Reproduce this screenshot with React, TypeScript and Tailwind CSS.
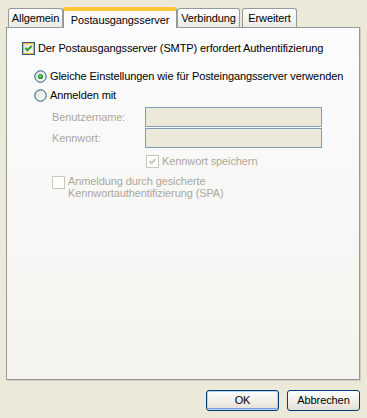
import React from "react";

const font = "font-['Tahoma','Liberation_Sans','DejaVu_Sans',sans-serif]";

const Check = ({ checked, disabled, hover }: { checked?: boolean; disabled?: boolean; hover?: boolean }) => (
    <svg width="13" height="13" viewBox="0 0 13 13" className="shrink-0">
        <defs>
            <linearGradient id="cbg" x1="0" y1="0" x2="1" y2="1">
                <stop offset="0" stopColor="#DCDCD7" />
                <stop offset="1" stopColor="#FFFFFF" />
            </linearGradient>
        </defs>
        <rect x="0.5" y="0.5" width="12" height="12" fill={disabled ? "#FFFFFF" : "url(#cbg)"} stroke={disabled ? "#CAC8BB" : "#1C5180"} />
        {hover && <rect x="1.5" y="1.5" width="10" height="10" fill="none" stroke="#F8B636" strokeWidth="1.2" />}
        {checked && (
            <polyline points="3.5,6 5.5,8.3 9.6,3.8" fill="none" stroke={disabled ? "#CAC8BB" : "#21A121"} strokeWidth="2" />
        )}
    </svg>
);

const Radio = ({ checked }: { checked?: boolean }) => (
    <svg width="13" height="13" viewBox="0 0 13 13" className="shrink-0">
        <defs>
            <linearGradient id="rbg" x1="0" y1="0" x2="1" y2="1">
                <stop offset="0" stopColor="#DCDCD7" />
                <stop offset="1" stopColor="#FFFFFF" />
            </linearGradient>
        </defs>
        <circle cx="6.5" cy="6.5" r="5.7" fill="url(#rbg)" stroke="#1C5180" strokeWidth="1" />
        {checked && (
            <>
                <circle cx="6.5" cy="6.5" r="2.6" fill="#21A121" />
                <circle cx="6.2" cy="6.2" r="1.1" fill="#7FD97F" />
            </>
        )}
    </svg>
);

const tabs = ["Allgemein", "Postausgangsserver", "Verbindung", "Erweitert"];
const tabWidths = ["w-[55px]", "w-[114px]", "w-[63px]", "w-[55px]"];

export default function App() {
    return (
        <div className={`w-[367px] h-[418px] bg-[#ECE9D8] text-[11px] tracking-[-0.1px] text-black ${font} flex flex-col`}>
            <div className="flex flex-row items-end h-[21px] mt-[7px] pl-[8px]">
                {tabs.map((t, i) =>
                    i === 1 ? (
                        <div key={t} className={`${tabWidths[i]} h-[21px] relative z-10 bg-[#FCFCFE] border-x border-[#919B9C] rounded-t-[3px] border-t-[3px] border-t-[#FFC83C] shadow-[inset_0_1px_0_#FFC83C] flex items-start justify-center pt-[2px]`}>
                            {t}
                        </div>
                    ) : (
                        <div key={t} className={`${tabWidths[i]} h-[19px] mb-px ${i === 3 ? "ml-[2px]" : ""} bg-linear-to-b from-[#FFFFFF] to-[#ECEBE6] border border-b-0 border-[#919B9C] rounded-t-[3px] flex items-center justify-center pt-[1px]`}>
                            {t}
                        </div>
                    )
                )}
            </div>
            <div className="ml-[6px] w-[354px] h-[353px] -mt-px border border-[#919B9C] bg-linear-to-b from-[#FCFCFE] to-[#F4F3EE] shadow-[1px_1px_0_#D0CEBF] flex flex-col">
                <div className="flex items-center h-[13px] mt-[14px] ml-[15px] gap-[3px] whitespace-nowrap">
                    <Check checked hover />
                    <span>Der Postausgangsserver (SMTP) erfordert Authentifizierung</span>
                </div>
                <div className="flex items-center h-[13px] mt-[15px] ml-[27px] gap-[3px] whitespace-nowrap">
                    <Radio checked />
                    <span>Gleiche Einstellungen wie für Posteingangsserver verwenden</span>
                </div>
                <div className="flex items-center h-[13px] mt-[6px] ml-[27px] gap-[3px] whitespace-nowrap">
                    <Radio />
                    <span>Anmelden mit</span>
                </div>
                <div className="flex items-center h-[20px] mt-[5px] ml-[45px] text-[#ACA899]">
                    <span className="w-[93px]">Benutzername:</span>
                    <div className="w-[177px] h-[20px] border border-[#7F9DB9] bg-[#ECE9D8]" />
                </div>
                <div className="flex items-center h-[20px] mt-[1px] ml-[45px] text-[#ACA899]">
                    <span className="w-[93px]">Kennwort:</span>
                    <div className="w-[177px] h-[20px] border border-[#7F9DB9] bg-[#ECE9D8]" />
                </div>
                <div className="flex items-center h-[13px] mt-[7px] ml-[139px] gap-[3px] whitespace-nowrap text-[#ACA899]">
                    <Check checked disabled />
                    <span>Kennwort speichern</span>
                </div>
                <div className="flex items-start mt-[8px] ml-[45px] gap-[3px] text-[#ACA899]">
                    <Check disabled />
                    <span className="leading-[12px] -mt-px">
                        Anmeldung durch gesicherte
                        <br />
                        Kennwortauthentifizierung (SPA)
                    </span>
                </div>
            </div>
            <div className="flex flex-row justify-end gap-[8px] mt-[10px] pr-[7px]">
                <button className="w-[73px] h-[21px] rounded-[3px] border border-[#003C74] bg-linear-to-b from-[#FFFFFF] to-[#E3E0D5] shadow-[inset_0_0_0_1px_#B9D1F4,inset_0_-1px_0_1px_#7B9EE2] flex items-center justify-center">
                    OK
                </button>
                <button className="w-[73px] h-[21px] rounded-[3px] border border-[#003C74] bg-linear-to-b from-[#FFFFFF] to-[#E3E0D5] flex items-center justify-center">
                    Abbrechen
                </button>
            </div>
        </div>
    );
}
